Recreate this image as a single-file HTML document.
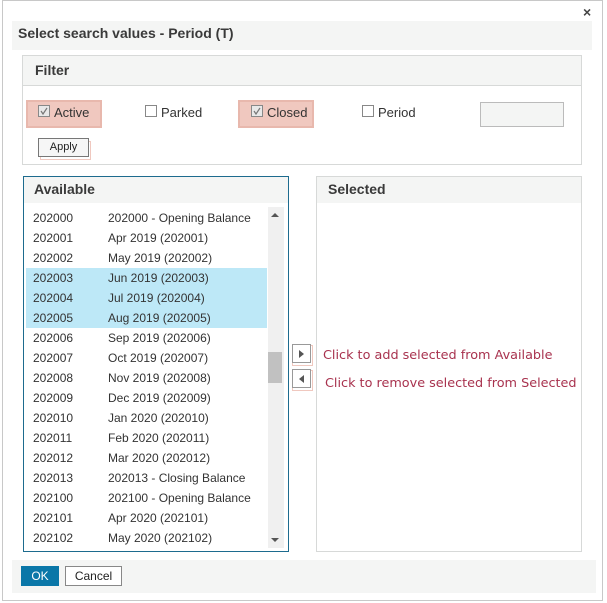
<!DOCTYPE html>
<html><head><style>
body{margin:0;width:607px;height:603px;background:#fff;font-family:"Liberation Sans",sans-serif;position:relative;overflow:hidden}
.a{position:absolute;box-sizing:border-box}
.t{font-size:12px;color:#333}
.row{position:absolute;left:3px;width:241px;height:20px;line-height:20px;font-size:12px;color:#333}
.row span{position:absolute}
.hl{background:#bde8f7}
.cb{position:absolute;width:12px;height:12px;border:1px solid #888;background:#fff;box-sizing:border-box}
.red{position:absolute;font-family:"DejaVu Sans",sans-serif;font-size:12.8px;color:#a8324e;white-space:nowrap}
</style></head><body>
<div class="a" style="left:2px;top:0;width:601px;height:601px;border:1px solid #c8c8c8"></div>
<div class="a" style="left:583px;top:4px;font-size:14px;font-weight:bold;color:#444">×</div>
<div class="a" style="left:12px;top:21px;width:580px;height:29px;background:#f4f5f4"></div>
<div class="a" style="left:18px;top:25px;font-size:14px;font-weight:bold;color:#3a3a3a">Select search values - Period (T)</div>
<div class="a" style="left:22px;top:55px;width:560px;height:110px;border:1px solid #d7d9d8"></div>
<div class="a" style="left:23px;top:56px;width:558px;height:30px;background:#f4f5f4;border-bottom:1px solid #d7d9d8"></div>
<div class="a" style="left:35px;top:62px;font-size:14px;font-weight:bold;color:#3a3a3a">Filter</div>
<div class="a" style="left:26px;top:100px;width:76px;height:28px;background:#f0c8bf;border:2px solid #e8b8ad"></div>
<div class="cb" style="left:38px;top:105px;background:#e8e8e8"></div>
<svg class="a" style="left:38px;top:105px" width="12" height="12"><path d="M3 6 L5 9 L9 3" stroke="#777" stroke-width="1.2" fill="none"/></svg>
<div class="a t" style="left:54px;top:105px;font-size:13px">Active</div>
<div class="cb" style="left:145px;top:105px"></div><div class="a t" style="left:161px;top:105px;font-size:13px">Parked</div>
<div class="a" style="left:238px;top:100px;width:76px;height:28px;background:#f0c8bf;border:2px solid #e8b8ad"></div>
<div class="cb" style="left:251px;top:105px;background:#e8e8e8"></div>
<svg class="a" style="left:251px;top:105px" width="12" height="12"><path d="M3 6 L5 9 L9 3" stroke="#777" stroke-width="1.2" fill="none"/></svg>
<div class="a t" style="left:267px;top:105px;font-size:13px">Closed</div>
<div class="cb" style="left:362px;top:105px"></div><div class="a t" style="left:378px;top:105px;font-size:13px">Period</div>
<div class="a" style="left:480px;top:102px;width:84px;height:25px;background:#f4f5f4;border:1px solid #bbb"></div>
<div class="a" style="left:40px;top:141px;width:51px;height:19px;border:1px solid #f0c8bf"></div>
<div class="a" style="left:38px;top:138px;width:51px;height:19px;border:1px solid #777;background:#f6f6f6;font-size:11px;line-height:17px;text-align:center;color:#222">Apply</div>
<div class="a" style="left:23px;top:176px;width:266px;height:376px;border:1px solid #1d6b8e"></div>
<div class="a" style="left:24px;top:177px;width:264px;height:26px;background:#f4f5f4"></div>
<div class="a" style="left:34px;top:181px;font-size:14px;font-weight:bold;color:#3a3a3a">Available</div>
<div class="a" style="left:23px;top:208px;width:250px;height:340px">
<div class="row" style="top:0"><span style="left:7px">202000</span><span style="left:82px">202000 - Opening Balance</span></div>
<div class="row" style="top:20px"><span style="left:7px">202001</span><span style="left:82px">Apr 2019 (202001)</span></div>
<div class="row" style="top:40px"><span style="left:7px">202002</span><span style="left:82px">May 2019 (202002)</span></div>
<div class="row hl" style="top:60px"><span style="left:7px">202003</span><span style="left:82px">Jun 2019 (202003)</span></div>
<div class="row hl" style="top:80px"><span style="left:7px">202004</span><span style="left:82px">Jul 2019 (202004)</span></div>
<div class="row hl" style="top:100px"><span style="left:7px">202005</span><span style="left:82px">Aug 2019 (202005)</span></div>
<div class="row" style="top:120px"><span style="left:7px">202006</span><span style="left:82px">Sep 2019 (202006)</span></div>
<div class="row" style="top:140px"><span style="left:7px">202007</span><span style="left:82px">Oct 2019 (202007)</span></div>
<div class="row" style="top:160px"><span style="left:7px">202008</span><span style="left:82px">Nov 2019 (202008)</span></div>
<div class="row" style="top:180px"><span style="left:7px">202009</span><span style="left:82px">Dec 2019 (202009)</span></div>
<div class="row" style="top:200px"><span style="left:7px">202010</span><span style="left:82px">Jan 2020 (202010)</span></div>
<div class="row" style="top:220px"><span style="left:7px">202011</span><span style="left:82px">Feb 2020 (202011)</span></div>
<div class="row" style="top:240px"><span style="left:7px">202012</span><span style="left:82px">Mar 2020 (202012)</span></div>
<div class="row" style="top:260px"><span style="left:7px">202013</span><span style="left:82px">202013 - Closing Balance</span></div>
<div class="row" style="top:280px"><span style="left:7px">202100</span><span style="left:82px">202100 - Opening Balance</span></div>
<div class="row" style="top:300px"><span style="left:7px">202101</span><span style="left:82px">Apr 2020 (202101)</span></div>
<div class="row" style="top:320px"><span style="left:7px">202102</span><span style="left:82px">May 2020 (202102)</span></div>
</div>
<div class="a" style="left:268px;top:207px;width:16px;height:341px;background:#f0f0f0"></div>
<div class="a" style="left:268px;top:352px;width:14px;height:31px;background:#c1c1c1"></div>
<svg class="a" style="left:271px;top:212px" width="8" height="6"><path d="M0 5 L4 1 L8 5Z" fill="#555"/></svg>
<svg class="a" style="left:271px;top:537px" width="8" height="6"><path d="M0 1 L4 5 L8 1Z" fill="#555"/></svg>
<div class="a" style="left:292px;top:345px;width:21px;height:21px;border:1px solid #f0c8bf"></div>
<div class="a" style="left:292px;top:344px;width:19px;height:19px;border:1px solid #999;background:#fff"></div>
<svg class="a" style="left:299px;top:350px" width="5" height="8"><path d="M0 0 L5 4 L0 8Z" fill="#555"/></svg>
<div class="a" style="left:292px;top:370px;width:21px;height:21px;border:1px solid #f0c8bf"></div>
<div class="a" style="left:292px;top:369px;width:19px;height:19px;border:1px solid #999;background:#fff"></div>
<svg class="a" style="left:299px;top:375px" width="5" height="8"><path d="M5 0 L0 4 L5 8Z" fill="#555"/></svg>
<div class="red" style="left:323px;top:348px">Click to add selected from Available</div>
<div class="red" style="left:325px;top:376px">Click to remove selected from Selected</div>
<div class="a" style="left:316px;top:176px;width:266px;height:376px;border:1px solid #d7d9d8"></div>
<div class="a" style="left:317px;top:177px;width:264px;height:26px;background:#f4f5f4"></div>
<div class="a" style="left:328px;top:181px;font-size:14px;font-weight:bold;color:#3a3a3a">Selected</div>
<div class="a" style="left:12px;top:560px;width:584px;height:33px;background:#f4f5f4"></div>
<div class="a" style="left:21px;top:566px;width:38px;height:20px;background:#0a77a8;color:#fff;font-size:12px;line-height:20px;text-align:center">OK</div>
<div class="a" style="left:65px;top:566px;width:57px;height:20px;border:1px solid #888;background:#fff;color:#222;font-size:12px;line-height:18px;text-align:center">Cancel</div>
</body></html>
